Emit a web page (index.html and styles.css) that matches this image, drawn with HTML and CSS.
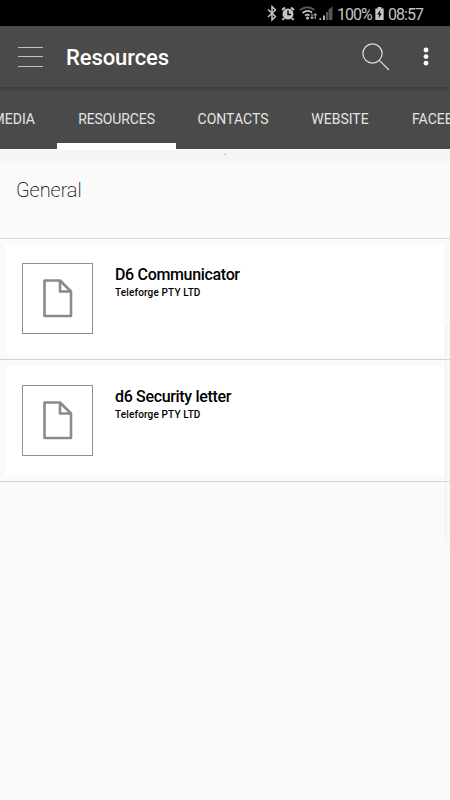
FILE: index.html
```
<!DOCTYPE html>
<html lang="en">
<head>
    <meta charset="UTF-8">
    <title>Resources</title>
    <link rel="stylesheet" href="styles.css">
</head>
<body>
    <div class="screen">
        <!-- Status bar -->
        <div class="status-bar">
            <svg class="status-icons" width="70" height="26" viewBox="0 0 70 26">
                <!-- Bluetooth -->
                <path d="M3 9.500l7.500 7-3.500 3.500V6.500L10.500 10l-7.500 7" fill="none" stroke="#c4c4c4" stroke-width="1.500"/>
                <!-- Alarm -->
                <circle cx="23" cy="14" r="5.500" fill="#c4c4c4"/>
                <path d="M17 10l3-2.500M29 10l-3-2.500M19 18l-1.500 2M27 18l1.500 2" stroke="#c4c4c4" stroke-width="2"/>
                <path d="M23 10.500v4h3" fill="none" stroke="#000" stroke-width="1.400"/>
                <!-- Wifi -->
                <path d="M35 10q7.500-5.500 14.500 0" fill="none" stroke="#555" stroke-width="2"/>
                <path d="M37.500 13q5-4 9.500-.5M40 15.700q2.500-2 4.500-.2" fill="none" stroke="#c4c4c4" stroke-width="1.700"/>
                <circle cx="42.500" cy="18" r="1.500" fill="#c4c4c4"/>
                <path d="M47 13.500v5M45.500 17l1.500 2 1.500-2M50.200 19v-5M48.700 15.500l1.500-2 1.500 2" fill="none" stroke="#c4c4c4" stroke-width="1"/>
                <!-- Signal -->
                <path d="M54.500 18H56v2h-1.500zM58 15.500h2V20h-2z" fill="#b5b5b5"/>
                <path d="M61 12h2v8h-2zM63.500 9.500l4-3V20h-4z" fill="#555"/>
            </svg>
            <span class="battery-level">100%</span>
            <svg class="battery" width="9" height="13" viewBox="0 0 9 14">
                <path d="M0 1.500h2.500V0h4v1.500H9V14H0z" fill="#c4c4c4"/>
                <path d="M5.500 3L2 8h2.200l-.7 4L7 7H4.800z" fill="#000"/>
            </svg>
            <span class="clock">08:57</span>
        </div>

        <header class="app-bar">
            <div class="menu-button">
                <span></span>
                <span></span>
                <span></span>
            </div>
            <h1>Resources</h1>
            <svg class="search" width="28" height="28" viewBox="0 0 28 28">
                <circle cx="10.500" cy="10.500" r="9.600"/>
                <path d="M17.300 17.300l9.700 9.700"/>
            </svg>
            <svg class="more" width="6" height="20" viewBox="0 0 6 20">
                <circle cx="3" cy="3" r="2.400"/>
                <circle cx="3" cy="9.600" r="2.400"/>
                <circle cx="3" cy="16.200" r="2.400"/>
            </svg>
        </header>

        <nav class="tabs">
            <a class="tab tab-media">MEDIA</a>
            <a class="tab tab-resources active">RESOURCES</a>
            <a class="tab tab-contacts">CONTACTS</a>
            <a class="tab tab-website">WEBSITE</a>
            <a class="tab tab-facebook">FACEBOOK</a>
        </nav>

        <div class="hint"><span></span></div>

        <main>
            <h2>General</h2>
            <div class="row">
                <div class="card">
                    <div class="thumb">
                        <svg width="30" height="39" viewBox="0 0 30 39">
                            <path d="M1.500 1.500h15.500l11 11v24.500H1.500zM17 1.500v11h11"/>
                        </svg>
                    </div>
                    <div class="info">
                        <h3>D6 Communicator</h3>
                        <p>Teleforge PTY LTD</p>
                    </div>
                </div>
            </div>
            <div class="row last">
                <div class="card">
                    <div class="thumb">
                        <svg width="30" height="39" viewBox="0 0 30 39">
                            <path d="M1.500 1.500h15.500l11 11v24.500H1.500zM17 1.500v11h11"/>
                        </svg>
                    </div>
                    <div class="info">
                        <h3>d6 Security letter</h3>
                        <p>Teleforge PTY LTD</p>
                    </div>
                </div>
            </div>
        </main>

        <!-- Edge panel handle -->
        <div class="edge-panel"></div>
    </div>
</body>
</html>
```
FILE: styles.css
```
* {
    box-sizing: border-box;
}

body {
    margin: 0;
    font-family: Roboto, "Liberation Sans", sans-serif;
    background-color: #fafafa;
    color: #000000;
}

.screen {
    position: relative;
    width: 450px;
    height: 800px;
    overflow: hidden;
}

/* Status bar */
.status-bar {
    display: flex;
    align-items: center;
    height: 26px;
    padding-left: 265px;
    background: #000000;
    color: #c4c4c4;
    font-size: 16px;
    line-height: 26px;
}

.status-icons {
    flex: none;
}

.battery-level {
    width: 40px;
    padding: 3px 0 0 2px;
    letter-spacing: -1px;
}

.battery {
    flex: none;
    margin-top: 1px;
}

.clock {
    padding: 3px 0 0 4px;
    letter-spacing: -0.95px;
}

/* App bar */
.app-bar {
    position: relative;
    z-index: 1;
    display: flex;
    align-items: center;
    height: 61px;
    padding: 0 21px 0 18px;
    background: #4a4a4a;
    color: #ffffff;
    box-shadow: 0 1px 4px rgba(0, 0, 0, 0.3);
}

.menu-button {
    display: flex;
    flex-direction: column;
    justify-content: space-between;
    width: 25px;
    height: 20px;
}

.menu-button span {
    height: 1px;
    background: #c0c0c0;
}

h1 {
    flex: 1;
    margin: 3px 0 0 23px;
    font-size: 22px;
    font-weight: 500;
    letter-spacing: -0.1px;
    line-height: 26px;
}

.search {
    margin-right: 33px;
    fill: none;
    stroke: #dedede;
    stroke-width: 1.2;
}

.more {
    fill: #ffffff;
}

/* Tabs */
.tabs {
    display: flex;
    height: 62px;
    background: #4a4a4a;
    overflow: hidden;
}

.tab {
    flex: none;
    height: 62px;
    padding-top: 1px;
    color: #e4e4e4;
    font-size: 14px;
    line-height: 62px;
    text-align: center;
    white-space: nowrap;
}

.tab-media {
    display: flex;
    justify-content: flex-end;
    width: 57px;
    padding-right: 22px;
}

.tab-resources {
    width: 119px;
    letter-spacing: -0.1px;
}

.tab-contacts {
    width: 114px;
}

.tab-website {
    width: 100px;
}

.tab-facebook {
    padding-left: 22px;
}

.tab.active {
    border-bottom: 6px solid #ffffff;
}

.hint {
    display: flex;
    justify-content: center;
    height: 12px;
    padding-top: 4px;
    background: #f5f5f5;
    border-top: 1px solid #ffffff;
}

.hint span {
    width: 2px;
    height: 1px;
    background: #bbbbbb;
}

/* Resource list */
h2 {
    height: 78px;
    margin: 0;
    padding: 16px 16px 0;
    border-bottom: 1px solid #dcdcdc;
    font-size: 20px;
    font-weight: 200;
    letter-spacing: -0.1px;
    line-height: 26px;
}

.row {
    height: 121px;
    padding: 5px 6px 5px 5px;
    border-bottom: 1px solid #d2d2d2;
}

.row.last {
    height: 122px;
    padding-top: 6px;
}

.card {
    display: flex;
    height: 110px;
    padding: 19px 17px;
    border-radius: 3px;
    background: #ffffff;
}

.thumb {
    display: flex;
    justify-content: center;
    align-items: center;
    width: 71px;
    height: 71px;
    border: 1px solid #909090;
}

.thumb svg {
    fill: none;
    stroke: #8a8a8a;
    stroke-width: 2.6;
    stroke-linejoin: round;
}

.info {
    padding-left: 22px;
}

h3 {
    margin: 2px 0 0;
    font-size: 16px;
    font-weight: 500;
    letter-spacing: -0.33px;
    line-height: 19px;
}

.info p {
    margin: 1px 0 0;
    font-size: 10px;
    font-weight: 500;
    letter-spacing: 0.15px;
    line-height: 15px;
}

.edge-panel {
    position: absolute;
    top: 323px;
    right: -10px;
    width: 15px;
    height: 223px;
    border: 1px solid rgba(0, 0, 0, 0.04);
    border-radius: 8px;
    background: rgba(245, 245, 245, 0.3);
}
```
